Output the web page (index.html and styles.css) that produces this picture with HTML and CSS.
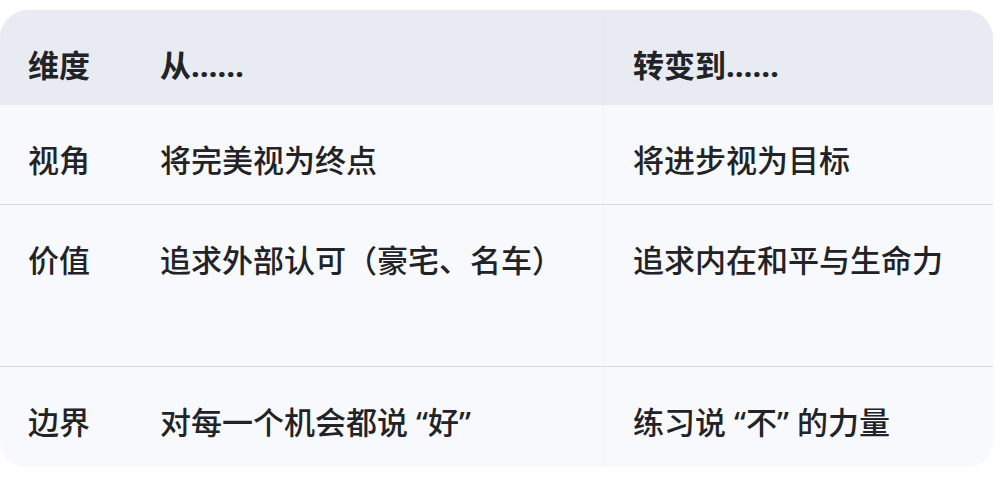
FILE: index.html
```html
<!DOCTYPE html>
<html lang="zh-CN">
<head>
<meta charset="utf-8">
<title>对比表</title>
<link rel="stylesheet" href="styles.css">
</head>
<body>
<div class="card">
  <div class="row head">
    <div class="cell c1">维度</div>
    <div class="cell c2">从……</div>
    <div class="cell c3">转变到……</div>
  </div>
  <div class="row r1">
    <div class="cell c1">视角</div>
    <div class="cell c2">将完美视为终点</div>
    <div class="cell c3">将进步视为目标</div>
  </div>
  <div class="row r2">
    <div class="cell c1">价值</div>
    <div class="cell c2">追求外部认可（豪宅、名车）</div>
    <div class="cell c3">追求内在和平与生命力</div>
  </div>
  <div class="row r3">
    <div class="cell c1">边界</div>
    <div class="cell c2">对每一个机会都说 “好”</div>
    <div class="cell c3">练习说 “不” 的力量</div>
  </div>
</div>
</body>
</html>
```

FILE: styles.css
```css
html, body {
  margin: 0;
  padding: 0;
  background: #ffffff;
}

body {
  font-family: "Noto Sans", "Noto Sans CJK SC", sans-serif;
  color: #222326;
}

.card {
  margin-top: 10px;
  width: 993px;
  border-radius: 28px;
  overflow: hidden;
  background: #f8f9fc;
  box-shadow: 0 1px 3px rgba(0, 0, 0, 0.03);
}

.row {
  display: grid;
  grid-template-columns: 130px 473px 390px;
  box-sizing: border-box;
}

.head {
  height: 95px;
  background: #e8ecf2;
}

.r1 {
  height: 100px;
  border-bottom: 1px solid #d9dbe0;
}

.r2 {
  height: 162px;
  border-bottom: 1px solid #d9dbe0;
}

.r3 {
  height: 100px;
}

.cell {
  font-size: 31px;
  line-height: 46px;
  padding-top: 32px;
  font-weight: 500;
  white-space: nowrap;
}

.head .cell {
  font-weight: 700;
}

.c1 {
  padding-left: 28px;
}

.c2 {
  padding-left: 30px;
}

.c3 {
  padding-left: 29px;
  border-left: 1px solid #f2f3f7;
}

.head .c3 {
  border-left-color: #e4e8ef;
}
```
